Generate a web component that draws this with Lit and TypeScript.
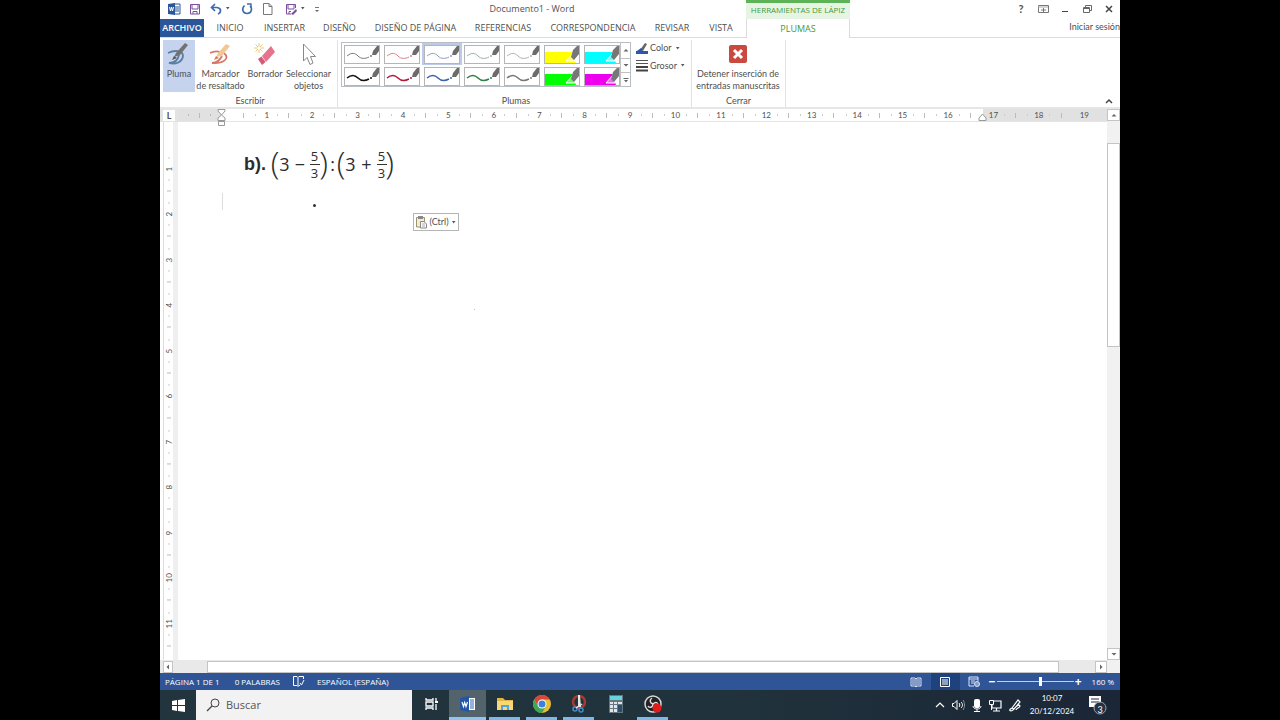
import { LitElement, html, css, svg } from "lit";
import { customElement } from "lit/decorators.js";
import { classMap } from "lit/directives/class-map.js";

const range = (from: number, to: number) => Array.from({ length: to - from + 1 }, (_, i) => from + i);

const wave = "M2 10C7 6 10 7 13 10C16 13 20 13 24 11";
const pens = [
  { name: "Pluma negra fina", color: "#777", w: 1 },
  { name: "Pluma roja fina", color: "#d98088", w: 1 },
  { name: "Pluma azul fina", color: "#8b9cc0", w: 1, selected: true },
  { name: "Pluma verde fina", color: "#9bb0a0", w: 1 },
  { name: "Pluma gris fina", color: "#b0b0b0", w: 1 },
  { name: "Marcador amarillo", color: "#ffff00", marker: true },
  { name: "Marcador turquesa", color: "#00ffff", marker: true },
  { name: "Pluma negra", color: "#111", w: 1.6 },
  { name: "Pluma roja", color: "#b3173a", w: 1.5 },
  { name: "Pluma azul", color: "#3d62b0", w: 1.5 },
  { name: "Pluma verde", color: "#2e8048", w: 1.5 },
  { name: "Pluma gris", color: "#777", w: 1.5 },
  { name: "Marcador verde", color: "#00ff00", marker: true },
  { name: "Marcador fucsia", color: "#ee00ee", marker: true },
];

const penPicture = (p: any) => svg`
  ${p.marker
    ? svg`<path d="M0 6H34V17H0Z" fill=${p.color}/><path d="M27 6H34V17H31Z" fill="#fff"/><path d="M21 15L27 8L30 15Z" fill="#fff" fill-opacity=".4" stroke="#fff"/><path d="M26 11L28 4L32 0H34V8L29 14Z" fill="#777"/>`
    : svg`<path d=${wave} fill="none" stroke=${p.color} stroke-width=${p.w}/><path d="M27 9L28 5L32 0H34V5L31 9Z" fill="#6b6b6b"/><circle cx="26" cy="10" r="1" fill=${p.color}/>`}`;

const icons: Record<string, any> = {
  word: svg`<path d="M7 2H13V12H7" fill="#fff" stroke="#2b579a"/><path d="M8 5H12M8 7H12M8 9H12" stroke="#2b579a"/><path d="M1 2L8 1V13L1 12Z" fill="#2b579a"/><path d="M2.500 5L3.500 9L4.500 5L5.500 9L6.500 5" fill="none" stroke="#fff"/>`,
  save: svg`<path d="M2.500 2.500H11.500V12H2.500Z" fill="#fff" stroke="#7b4f9c"/><path d="M4 3V7H10V3M5 12V9.500H9V12" fill="none" stroke="#7b4f9c"/>`,
  undo: svg`<path d="M6 2L2.500 5.500L6 9M3 5.500H8C13 6 12 11 9 12" fill="none" stroke="#3d6cae" stroke-width="1.700"/>`,
  redo: svg`<path d="M4.500 3.500C1 7 3 11.500 7 11.500C12 11.500 12.500 6 10 4" fill="none" stroke="#3d6cae" stroke-width="1.600"/><path d="M7 2H11V6" fill="none" stroke="#3d6cae" stroke-width="1.400"/>`,
  page: svg`<path d="M2.500 1.500H8L11 4.500V12.500H2.500ZM8 1.500V4.500H11" fill="#fff" stroke="#777"/>`,
  saveAs: svg`<path d="M11.500 6V2.500H2.500V12H7" fill="#fff" stroke="#7b4f9c"/><path d="M4 3V7H10V3M5 12V9.500H7" fill="none" stroke="#7b4f9c"/><path d="M7 12L12 7L13 9L9 13Z" fill="#7b4f9c"/>`,
  custom: svg`<path d="M4 5.500H8" stroke="#777"/><path d="M4 8H8L6 10Z" fill="#666"/>`,
  ribbonOpt: svg`<path d="M2.500 3.500H12.500V10.500H2.500Z" fill="#fff" stroke="#777"/><path d="M2 5H12" stroke="#aaa"/><path d="M5 8H10M7.500 6V10" stroke="#777"/>`,
  min: svg`<path d="M4 9.500H10" stroke="#444"/>`,
  restore: svg`<path d="M5.500 5V3.500H11.500V8.500H9" fill="none" stroke="#666"/><path d="M3.500 5.500H9.500V10.500H3.500ZM3.500 6.500H9" fill="#fff" stroke="#666"/>`,
  close: svg`<path d="M4 4L10 10M10 4L4 10" stroke="#444" stroke-width="1.500"/>`,
  caret: svg`<path d="M2 2H5.500L3.700 4.500Z" fill="#555"/>`,
  pen: svg`<path d="M1 10C7 7 16 7 16 13C15 19 9 22 2 20C8 20 11 17 12 12" fill="none" stroke="#5a7f9e" stroke-width="1.800"/><path d="M7 14L9 10L18 0L21 2L13 12Z" fill="#727272"/><path d="M5 17L7 13L10 15Z" fill="#555"/>`,
  marker: svg`<path d="M1 10C5 8 8 8 11 9M15 10C22 16 13 21 3 20C8 20 11 17 13 13" fill="none" stroke="#d9776c" stroke-width="1.800"/><path d="M7 14L9 10L17 1L21 3L13 13Z" fill="#f0c896"/><path d="M5 17L7 13L10 15Z" fill="#cf8055"/>`,
  eraser: svg`<path d="M6 0V10M1 5H11M2.500 1.500L9.500 8.500M9.500 1.500L2.500 8.500" stroke="#ecc977"/><circle cx="6" cy="5" r="1.500" fill="#fff"/><path d="M9 13L18 3L22 9L13 19Z" fill="#e5738d"/><path d="M5 16L8.500 13.500L12.500 19L9 22Z" fill="#d95676"/>`,
  select: svg`<path d="M6.500 1V18L10 14.500L13 21.500L16 20L13.500 13.500H18.500Z" fill="#fff" stroke="#888"/>`,
  penColor: svg`<path d="M0 9H12V12H0Z" fill="#2f56a8"/><path d="M4 8L9 1L11 2L7 9Z" fill="#666"/><path d="M1 9L5 6L7 8L4 10Z" fill="#2f56a8"/>`,
  weight: svg`<path d="M0 1.500H12M0 4.500H12" stroke="#555"/><path d="M0 8H12M0 11.500H12" stroke="#444" stroke-width="2"/>`,
  stop: svg`<rect x="1" y="1" width="18" height="18" rx="2" fill="#c9493f"/><path d="M6 6L14 14M14 6L6 14" stroke="#fff" stroke-width="3"/>`,
  up: svg`<path d="M1.500 5.500H6.500L4 3Z" fill="#666"/>`,
  down: svg`<path d="M1.500 3H6.500L4 5.500Z" fill="#666"/>`,
  left: svg`<path d="M5 1.500V6.500L2.500 4Z" fill="#666"/>`,
  right: svg`<path d="M3 1.500V6.500L5.500 4Z" fill="#666"/>`,
  more: svg`<path d="M1.500 2.500H6.500" stroke="#666"/><path d="M2 4H6L4 6.500Z" fill="#666"/>`,
  fold: svg`<path d="M1 6L4 3L7 6" fill="none" stroke="#444" stroke-width="1.500"/>`,
  paste: svg`<path d="M1.500 2.500H9.500V12H1.500Z" fill="#f5ecd0" stroke="#9c9370"/><path d="M3 1H8V4H3Z" fill="#888"/><path d="M5.500 6.500H9L11.500 9V13H5.500Z" fill="#fff" stroke="#888"/><path d="M7 9H10M7 11H10" stroke="#aaa"/>`,
  proof: svg`<path d="M6 2.500L5 1.500H1.500V10.500H5L6 11.500L7 10.500H8M6 2.500V11M6 2.500L7 1.500H11.500V4M8 8L9.500 10L12 5" fill="none" stroke="#fff"/>`,
  read: svg`<path d="M1 2H5L6 3L7 2H11V10H7L6 11L5 10H1ZM6 3V11M2 4H5M2 6H5M2 8H5M7 4H10M7 6H10M7 8H10" fill="none" stroke="#dbe5f5"/>`,
  print: svg`<path d="M1.500 1.500H10.500V10.500H1.500ZM3 4H9M3 6H9M3 8H9" fill="none" stroke="#fff"/>`,
  web: svg`<path d="M6 10H1V1H10V5M1 3H10M3 5H7M3 7H6" fill="none" stroke="#dbe5f5"/><circle cx="9" cy="8" r="2.500" fill="#7f9cc9" stroke="#dbe5f5"/>`,
  start: svg`<path d="M1 3L6 2V7H1ZM7 2L14 1V7H7ZM1 8H6V13L1 12ZM7 8H14V14L7 13Z" fill="#fff"/>`,
  search: svg`<circle cx="9" cy="5" r="4" fill="none" stroke="#444"/><path d="M6 8L1 13" stroke="#444" stroke-width="1.200"/>`,
  tasks: svg`<path d="M2 1V3H9V1M2 13V11H9V13M2 5H9V9H2ZM12 1V4M12 7V13" fill="none" stroke="#fff" stroke-width="1.300"/><path d="M11 5H14" stroke="#fff" stroke-width="2"/>`,
  wordApp: svg`<path d="M7 2H15V14H7" fill="#fff"/><path d="M10 4H14M10 6H14M10 8H14M10 10H14M10 12H14" stroke="#2f62b3"/><path d="M0 2L9 0V16L0 14Z" fill="#2456a6"/><path d="M2 6L3.500 10.500L4.700 6.500L6 10.500L7.500 6" fill="none" stroke="#fff" stroke-width="1.200"/>`,
  folder: svg`<path d="M0 2H6L8 4H16V14H0Z" fill="#e2b547"/><path d="M0 5H16V14H0Z" fill="#f8d775"/><path d="M4 14V9H12V14H10V11H6V14Z" fill="#54a3dc"/>`,
  chrome: svg`<circle cx="9" cy="9" r="9" fill="#e4bf32"/><path d="M1.200 4.500A9 9 0 0 1 16.800 4.500H9L5.100 11.200Z" fill="#d8473a"/><path d="M1.200 4.500L5.100 11.200L12.900 11.200L9 18A9 9 0 0 1 1.200 4.500Z" fill="#3fa757"/><circle cx="9" cy="9" r="4.500" fill="#fff"/><circle cx="9" cy="9" r="3.500" fill="#3f7fe0"/>`,
  snip: svg`<circle cx="9" cy="7" r="6" fill="none" stroke="#a8392e" stroke-width="2.500"/><path d="M8 0H10L11 12H8Z" fill="#e6e6e6"/><circle cx="5" cy="14" r="2" fill="none" stroke="#3e8fd0" stroke-width="1.500"/><circle cx="11" cy="15" r="2" fill="none" stroke="#3e8fd0" stroke-width="1.500"/><path d="M6 13L12 9" stroke="#e6e6e6" stroke-width="1.500"/>`,
  calc: svg`<path d="M1 0H15V18H1Z" fill="#66767f"/><path d="M2 1H14V5H2Z" fill="#67d3dd"/><path d="M2 7H5V9H2ZM6 7H9V9H6ZM10 7H14V9H10ZM2 10H5V13H2ZM6 10H9V13H6ZM2 14H5V17H2ZM6 14H9V17H6Z" fill="#dfe5e8"/><path d="M10 10H14V17H10Z" fill="#26506e"/>`,
  obs: svg`<circle cx="9" cy="9" r="8" fill="#222" stroke="#d8d8d8" stroke-width="1.500"/><path d="M9 9C6 8 5 5 8 3M9 9C12 6 14 8 14 10M9 9C9 13 5 13 4 11" fill="none" stroke="#ddd" stroke-width="1.500"/><circle cx="13" cy="13" r="4.500" fill="#e31b1b"/>`,
  chevron: svg`<path d="M4 9L8 5L12 9" fill="none" stroke="#fff" stroke-width="1.200"/>`,
  sound: svg`<path d="M1.500 5.500H3L6 2.500V11.500L3 8.500H1.500ZM8 5C9 6 9 8 8 9M10 4C12 6 12 8 10 10" fill="none" stroke="#fff"/><path d="M12 2C14 5 14 9 12 12" fill="none" stroke="#8b959c"/>`,
  mic: svg`<rect x="4" y="1" width="6" height="9" rx="2" fill="#fff"/><path d="M3 8C3 12 11 12 11 8M7 11V14M4 13.500H10" fill="none" stroke="#fff"/>`,
  net: svg`<path d="M3 3H12V10H3ZM7.500 10V13M4 13H11" fill="none" stroke="#fff" stroke-width="1.200"/><path d="M.5 2.500H4.500V6.500H.5ZM2.500 6V12" fill="#1f2e3a" stroke="#fff"/>`,
  ink: svg`<path d="M4 10L10 2L12 4L6 11ZM4 10C0 12 2 14 5 12C8 8 11 6 12 8C12 10 8 10 8 12" fill="none" stroke="#fff" stroke-width="1.200"/>`,
  note: svg`<path d="M1 1H13V12H9L6 15V12H1Z" fill="#fff"/><path d="M3 4H11M3 7H11" stroke="#1f2b38"/><circle cx="12" cy="13" r="6" fill="#26323d" stroke="#9aa4ab"/>`,
};
const icon = (name: string, w: number, h = w) =>
  html`<svg class="icon" width=${w} height=${h} viewBox="0 0 ${w} ${h}" aria-hidden="true">${icons[name]}</svg>`;

@customElement("app-root")
export class AppRoot extends LitElement {
  static styles = css`
    * { box-sizing: border-box; }
    :host {
      display: flex; justify-content: center; height: 100vh; min-height: 480px; background: #000;
      font-family: Lato, "Open Sans", sans-serif; font-size: 9px; line-height: 12px; color: #505050;
    }
    button, input { font: inherit; color: inherit; border: 0; background: none; padding: 0; margin: 0; border-radius: 0; }
    button { display: flex; align-items: center; justify-content: center; white-space: nowrap; }
    a { color: inherit; text-decoration: none; }
    .icon { display: block; flex: none; }
    .window { width: 75%; display: flex; flex-direction: column; background: #fff; overflow: hidden; }

    .top { display: grid; grid-template-columns: 586px 104px 1fr; grid-template-rows: 19px 19px; flex: none; }
    .title-row { display: grid; grid-template-columns: 165px 1fr; }
    .quick { display: grid; grid-template-columns: 28px 14px 35px 20px 22px 32px 14px; justify-items: center; align-items: center; height: 17px; }
    .quick button { gap: 1px; }
    .doc-title { font: 400 9px/18px "Open Sans", sans-serif; margin: 0; padding-right: 8px; text-align: center; width: 422px; }
    .context { background: #e6f5e3; border-top: 3px solid #5eb257; color: #449a40; text-align: center; font: 8px/13px "Open Sans", sans-serif; white-space: nowrap; }
    .controls { display: flex; justify-content: flex-end; align-items: center; gap: 8px; padding-right: 4px; height: 17px; }
    .controls button { width: 14px; height: 14px; }
    .help { font-weight: 700; font-size: 11px; }
    .tabs { display: grid; grid-template-columns: 44px 52px 57px 53px 99px 76px 104px 54px 44px; border-bottom: 1px solid #dcdcdc; font-family: "Open Sans", sans-serif; }
    .tab { height: 18px; }
    .tab.file { background: #2b579a; color: #fff; font-weight: 600; }
    .tab.pens { color: #449a40; border: 1px solid #dcdcdc; border-width: 0 1px; height: 19px; font-family: "Open Sans", sans-serif; }
    .account { border-bottom: 1px solid #dcdcdc; text-align: right; line-height: 15px; white-space: nowrap; }

    .ribbon { display: flex; height: 71px; flex: none; border-bottom: 2px solid #e6e6e6; }
    .group { display: flex; flex-direction: column; justify-content: space-between; margin: 2px 0 0; border-right: 1px solid #e2e2e2; height: 67px; }
    .group-name { text-align: center; }
    .write { width: 178px; padding-left: 3px; }
    .pengroup { width: 354px; padding: 2px 0 0 3px; }
    .finish { width: 94px; }
    .row { display: flex; }
    .tools { display: grid; grid-template-columns: 32px 51px 38px 49px; }
    .tool { flex-direction: column; justify-content: flex-start; height: 52px; padding-top: 3px; }
    .tool .icon { margin-bottom: 1px; }
    .tool.on { background: #c5d3ef; }
    .stop { flex-direction: column; padding-top: 4px; width: 92px; }
    .stop .icon { margin-bottom: 4px; }
    .gallery { display: grid; grid-template-columns: 278px 10px; border: 1px solid #b9bdc4; height: 45px; }
    .pens-grid { display: grid; grid-template-columns: repeat(7, 1fr); grid-template-rows: 22px 22px; }
    .pen { border: 2px solid transparent; }
    .pen .icon { border: 1px solid #b5b5b5; background: #fff; }
    .pen.on { border-color: #bccbe8; }
    .steps { display: grid; grid-template-rows: 1fr 1fr 1fr; border-left: 1px solid #c0c0c0; }
    .steps button + button { border-top: 1px solid #c0c0c0; }
    .opts { display: flex; flex-direction: column; gap: 5px; padding: 0 0 0 5px; }
    .opts button { gap: 2px; justify-content: flex-start; }
    .fold { margin: auto 7px 2px auto; }

    .body { flex: 1; min-height: 0; display: grid; grid-template-columns: 18px 1fr 13px; grid-template-rows: 13px 1fr 13px; }
    .corner { background: #e3e3e3; padding: 1px 0 0 3px; }
    .corner button { width: 12px; height: 11px; background: #fff; font-weight: 700; }
    .hruler { display: grid; grid-template-columns: 66px repeat(19, 1fr); font-size: 8px; line-height: 12px; text-align: center; position: relative;
      background: linear-gradient(90deg, #e1e1e1 43px, #fff 43px, #fff calc(100% - 124px), #e1e1e1 calc(100% - 124px)); border-bottom: 1px solid #e4e4e4; }
    .unit { background: linear-gradient(#bbb, #bbb) 100% 50% / 1px 5px no-repeat, linear-gradient(#ccc, #ccc) 25% 50% / 1px 2px no-repeat, linear-gradient(#ccc, #ccc) 75% 50% / 1px 2px no-repeat; }
    .unit:last-of-type { background: none; }
    .lead { background: linear-gradient(#bbb, #bbb) 21px 50% / 1px 5px no-repeat, linear-gradient(#bbb, #bbb) 100% 50% / 1px 5px no-repeat, linear-gradient(#bbb, #bbb) 10px 50% / 1px 2px no-repeat, linear-gradient(#bbb, #bbb) 32px 50% / 1px 2px no-repeat; }
    .indent { position: absolute; top: 0; left: 39px; }
    .indent.end { left: auto; right: 120px; top: 4px; }
    .vruler { display: grid; grid-template-rows: 24px repeat(11, 1fr) 14px; border-left: 1px solid #ddd; border-right: 5px solid #efefef; margin-left: 3px; font-size: 8px; line-height: 10px; }
    .vunit { writing-mode: vertical-rl; transform: rotate(180deg); text-align: center;
      background: linear-gradient(#bbb, #bbb) 50% 0 / 4px 1px no-repeat, linear-gradient(#ccc, #ccc) 50% 25% / 2px 1px no-repeat, linear-gradient(#ccc, #ccc) 50% 75% / 2px 1px no-repeat; }
    .page { position: relative; padding: 22px 0 0 44px; color: #2c2c2c; overflow: hidden; }
    .eq { display: grid; grid-template-columns: 27px 8px 11px 20px 9px 9px 9px 8px 11px 21px 9px 7px; justify-items: center; align-items: center; height: 40px; margin: 0; padding-left: 22px; font-family: "Open Sans", sans-serif; font-size: 18px; line-height: 24px; }
    .eq b { font-family: "Liberation Sans", Arial, sans-serif; justify-self: start; }
    .paren { font-size: 32px; font-weight: 300; line-height: 32px; padding-bottom: 4px; }
    .frac { display: flex; flex-direction: column; font-size: 13px; font-weight: 500; line-height: 16px; width: 10px; text-align: center; }
    .frac span + span { border-top: 1px solid #333; }
    .caret { width: 1px; height: 17px; background: #ddd; margin-top: 9px; }
    .ink { position: absolute; width: 3px; height: 3px; border-radius: 50%; background: #333; left: 135px; top: 82px; }
    .ink.faint { width: 1px; height: 1px; background: #aaa; left: 296px; top: 187px; }
    .paste { position: absolute; left: 235px; top: 91px; width: 46px; height: 18px; border: 1px solid #b5b5b5; background: #fff; color: #505050; gap: 1px; }
    .vbar { display: grid; grid-template-rows: 12px 22px 204px 1fr 12px; background: #f1f1f1; grid-row: 1 / 3; grid-column: 3; }
    .hbar { display: grid; grid-template-columns: 10px 34px 1fr 36px 12px; background: #e9e9e9; grid-column: 1 / 3; padding: 1px 0 0 3px; }
    .bar-btn, .thumb { background: #fff; border: 1px solid #c4c4c4; }
    .tail { background: #f1f1f1; }

    .status { height: 17px; flex: none; background: #2f5597; color: #fff; display: flex; align-items: center; padding: 0 6px 0 5px; white-space: nowrap; font: 8px/12px "Open Sans", sans-serif; }
    .words { margin: 0 12px 0 15px; }
    .lang { margin-left: 12px; }
    .views { display: flex; margin-left: auto; }
    .views button { width: 29px; height: 17px; }
    .views .on { background: #1f427d; }
    .zoom { display: flex; align-items: center; gap: 1px; margin: 0 10px 0 0; font-size: 12px; font-weight: 700; }
    .zoom input { appearance: none; width: 77px; height: 12px; background: linear-gradient(#c3d0e6, #c3d0e6) 0 50% / 100% 1px no-repeat; }
    .zoom input::-webkit-slider-thumb { appearance: none; width: 3px; height: 9px; background: #fff; }

    .task { height: 30px; flex: none; background: linear-gradient(90deg, #22343d, #20323c 60%, #1b2636); color: #fff; display: flex; }
    .start { width: 36px; }
    .find { width: 216px; background: #f2f2f2; display: flex; align-items: center; gap: 6px; padding-left: 10px; color: #555; }
    .find input { font: 11px/16px "Open Sans", sans-serif; width: 150px; outline: 0; }
    .find input::placeholder { color: #555; opacity: 1; }
    .app { width: 37px; border-bottom: 3px solid transparent; }
    .app.open { background: linear-gradient(#7bb9ea, #7bb9ea) 50% 100% / 31px 3px no-repeat border-box; }
    .app.active { background: #53636b; border-bottom-color: #8cc6f2; }
    .tray { display: flex; align-items: center; margin-left: auto; gap: 5px; }
    .clock { text-align: center; font-size: 8px; line-height: 13px; width: 50px; }
    .bell { position: relative; width: 38px; height: 30px; justify-content: flex-start; padding-left: 6px; }
    .count { position: absolute; left: 12px; width: 12px; bottom: 4px; text-align: center; }
  `;

  render() {
    const tabs = ["INICIO", "INSERTAR", "DISEÑO", "DISEÑO DE PÁGINA", "REFERENCIAS", "CORRESPONDENCIA", "REVISAR", "VISTA"];
    const frac = html`<span class="frac"><span>5</span><span>3</span></span>`;
    return html`
      <main class="window">
        <header class="top">
          <div class="title-row">
            <div class="quick">
              <button aria-label="Word">${icon("word", 14)}</button>
              <button aria-label="Guardar">${icon("save", 14)}</button>
              <button aria-label="Deshacer">${icon("undo", 14)}${icon("caret", 7)}</button>
              <button aria-label="Rehacer">${icon("redo", 14)}</button>
              <button aria-label="Nuevo">${icon("page", 14)}</button>
              <button aria-label="Guardar como">${icon("saveAs", 14)}${icon("caret", 7)}</button>
              <button aria-label="Personalizar">${icon("custom", 14)}</button>
            </div>
            <h1 class="doc-title">Documento1 - Word</h1>
          </div>
          <div class="context">HERRAMIENTAS DE LÁPIZ</div>
          <div class="controls">
            <button class="help" aria-label="Ayuda">?</button>
            <button aria-label="Opciones de la cinta">${icon("ribbonOpt", 14)}</button>
            <button aria-label="Minimizar">${icon("min", 14)}</button>
            <button aria-label="Restaurar">${icon("restore", 14)}</button>
            <button aria-label="Cerrar">${icon("close", 14)}</button>
          </div>
          <nav class="tabs">
            <button class="tab file">ARCHIVO</button>
            ${tabs.map((t) => html`<button class="tab">${t}</button>`)}
          </nav>
          <button class="tab pens">PLUMAS</button>
          <div class="account"><a href="#">Iniciar sesión</a></div>
        </header>

        <section class="ribbon">
          <div class="group write">
            <div class="tools">
              <button class="tool on">${icon("pen", 24)}<span>Pluma</span></button>
              <button class="tool">${icon("marker", 24)}<span>Marcador<br />de resaltado</span></button>
              <button class="tool">${icon("eraser", 24)}<span>Borrador</span></button>
              <button class="tool">${icon("select", 24)}<span>Seleccionar<br />objetos</span></button>
            </div>
            <div class="group-name">Escribir</div>
          </div>
          <div class="group pengroup">
            <div class="row">
              <div class="gallery">
                <div class="pens-grid">
                  ${pens.map((p) => html`<button class=${classMap({ pen: true, on: !!p.selected })} aria-label=${p.name}>
                    <svg class="icon" width="36" height="19" viewBox="0 0 34 17" aria-hidden="true">${penPicture(p)}</svg></button>`)}
                </div>
                <div class="steps">
                  <button aria-label="Fila anterior">${icon("up", 8)}</button>
                  <button aria-label="Fila siguiente">${icon("down", 8)}</button>
                  <button aria-label="Más plumas">${icon("more", 8)}</button>
                </div>
              </div>
              <div class="opts">
                <button>${icon("penColor", 12)}<span>Color</span>${icon("caret", 7)}</button>
                <button>${icon("weight", 12, 13)}<span>Grosor</span>${icon("caret", 7)}</button>
              </div>
            </div>
            <div class="group-name">Plumas</div>
          </div>
          <div class="group finish">
            <button class="stop">${icon("stop", 20)}<span>Detener inserción de<br />entradas manuscritas</span></button>
            <div class="group-name">Cerrar</div>
          </div>
          <button class="fold" aria-label="Contraer la cinta">${icon("fold", 8)}</button>
        </section>

        <section class="body">
          <div class="corner"><button aria-label="Tabulación">L</button></div>
          <div class="hruler">
            <span class="lead"></span>
            ${range(1, 19).map((n) => html`<span class="unit">${n}</span>`)}
            <svg class="indent" width="9" height="17" viewBox="0 0 9 17"><path d="M1 .5H8V2L4.500 6L1 2ZM4.500 6L8 9V11.500H1V9ZM1.500 12.500H7.500V16.500H1.500Z" fill="#fff" stroke="#999" /></svg>
            <svg class="indent end" width="9" height="8" viewBox="0 0 9 8"><path d="M1 7.500V5L4.500 1L8 5V7.500Z" fill="#fff" stroke="#999" /></svg>
          </div>
          <div class="vbar">
            <button class="bar-btn" aria-label="Subir">${icon("up", 8)}</button>
            <span></span><span class="thumb"></span><span></span>
            <button class="bar-btn" aria-label="Bajar">${icon("down", 8)}</button>
          </div>
          <div class="vruler"><span></span>${range(1, 11).map((n) => html`<span class="vunit">${n}</span>`)}</div>
          <article class="page">
            <p class="eq">
              <b>b).</b><span class="paren">(</span><span>3</span><span>−</span>${frac}<span class="paren">)</span><span>:</span>
              <span class="paren">(</span><span>3</span><span>+</span>${frac}<span class="paren">)</span>
            </p>
            <div class="caret"></div>
            <span class="ink"></span><span class="ink faint"></span>
            <button class="paste">${icon("paste", 13, 14)}<span>(Ctrl)</span>${icon("caret", 7)}</button>
          </article>
          <div class="hbar">
            <button class="bar-btn" aria-label="Izquierda">${icon("left", 8)}</button>
            <span></span><span class="thumb"></span><span></span>
            <button class="bar-btn" aria-label="Derecha">${icon("right", 8)}</button>
          </div>
          <div class="tail"></div>
        </section>

        <footer class="status">
          <span>PÁGINA 1 DE 1</span><span class="words">0 PALABRAS</span>${icon("proof", 13)}<span class="lang">ESPAÑOL (ESPAÑA)</span>
          <div class="views">
            <button aria-label="Modo de lectura">${icon("read", 12)}</button>
            <button class="on" aria-label="Diseño de impresión">${icon("print", 12)}</button>
            <button aria-label="Diseño web">${icon("web", 12)}</button>
          </div>
          <div class="zoom">
            <button aria-label="Alejar">−</button>
            <input type="range" min="0" max="100" value="57" aria-label="Zoom" />
            <button aria-label="Acercar">+</button>
          </div>
          <span>160 %</span>
        </footer>

        <footer class="task">
          <button class="start" aria-label="Inicio">${icon("start", 15)}</button>
          <label class="find">${icon("search", 14)}<input placeholder="Buscar" aria-label="Buscar" /></label>
          <button class="app" aria-label="Vista de tareas">${icon("tasks", 14)}</button>
          <button class="app active" aria-label="Word">${icon("wordApp", 16)}</button>
          <button class="app open" aria-label="Explorador">${icon("folder", 16)}</button>
          <button class="app open" aria-label="Chrome">${icon("chrome", 18)}</button>
          <button class="app open" aria-label="Recortes">${icon("snip", 18)}</button>
          <button class="app" aria-label="Calculadora">${icon("calc", 16, 18)}</button>
          <button class="app open" aria-label="OBS">${icon("obs", 18)}</button>
          <div class="tray">
            ${["chevron", "sound", "mic", "net", "ink"].map((n) => icon(n, 14))}
            <div class="clock">10:07<br />20/12/2024</div>
            <button class="bell" aria-label="Notificaciones">${icon("note", 19, 20)}<span class="count">3</span></button>
          </div>
        </footer>
      </main>
    `;
  }
}
